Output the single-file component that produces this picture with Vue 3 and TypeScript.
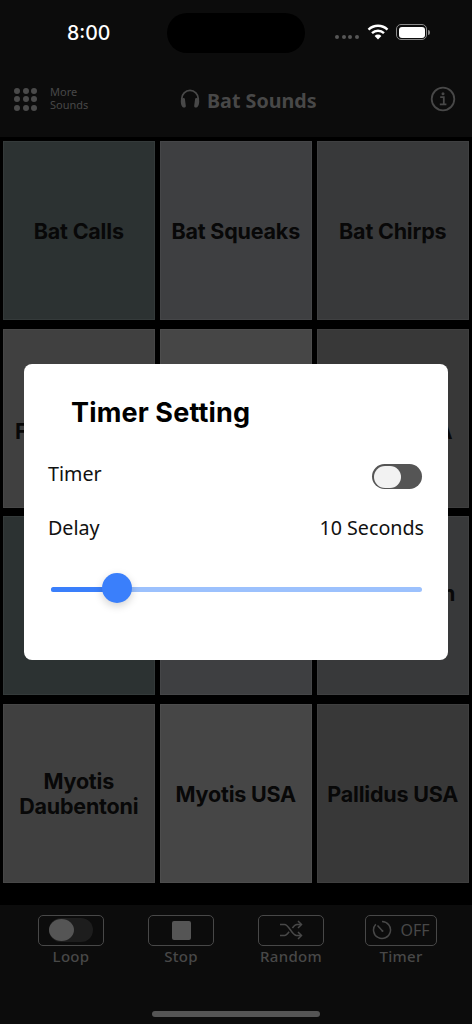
<template>
  <div class="phone">
    <div class="status-bar">
      <span class="clock">8:00</span>
      <div class="island"></div>
      <div class="signal">
        <i v-for="n in 4" :key="n"></i>
      </div>
      <svg class="wifi" width="22" height="16" viewBox="0 0 22 16">
        <path d="M1.5 5.6a13.6 13.6 0 0 1 19 0" fill="none" stroke="#fff" stroke-width="2.4" />
        <path d="M5 9.2a8.6 8.6 0 0 1 12 0" fill="none" stroke="#fff" stroke-width="2.4" />
        <path d="M7.6 11.9a4.8 4.8 0 0 1 6.8 0L11 15.4z" fill="#fff" />
      </svg>
      <div class="battery">
        <div class="battery-fill"></div>
      </div>
      <div class="battery-cap"></div>
    </div>

    <div class="nav-bar">
      <div class="more">
        <div class="dots">
          <i v-for="n in 9" :key="n"></i>
        </div>
        <span class="more-text">More<br />Sounds</span>
      </div>
      <div class="title">
        <svg width="20" height="20" viewBox="0 0 20 20">
          <path d="M1.8 12.5V9.6a8.200 8.200 0 0 1 16.400 0v2.900" fill="none" stroke="#484848" stroke-width="1.800" />
          <path d="M.8 12.200c0-2 1.200-3.200 2.700-3.200.8 0 1.300.5 1.400 1.100l.9 6.700c.1 1-.4 1.800-1.500 1.800C2 18.600.8 15.600.8 12.200z" fill="#484848" />
          <path d="M19.200 12.200c0-2-1.200-3.200-2.700-3.200-.8 0-1.300.5-1.400 1.100l-.9 6.700c-.1 1 .4 1.800 1.500 1.800 2.300 0 3.500-3 3.500-6.400z" fill="#484848" />
        </svg>
        <span>Bat Sounds</span>
      </div>
      <svg class="info" width="26" height="26" viewBox="0 0 26 26">
        <circle cx="13" cy="13" r="11.300" fill="none" stroke="#484848" stroke-width="1.800" />
        <circle cx="13" cy="7.800" r="1.500" fill="#484848" />
        <path d="M10.200 11.200h3.600v7M9.800 18.400h6.600" fill="none" stroke="#484848" stroke-width="1.800" />
      </svg>
    </div>

    <div class="pads">
      <div
        v-for="pad in pads"
        :key="pad.name"
        class="pad"
        :class="pad.tone"
      >{{ pad.name }}</div>
    </div>

    <div class="controls">
      <div class="controls-row">
        <div class="control">
          <div class="control-box">
            <div class="mini-track"><div class="mini-thumb"></div></div>
          </div>
          <span>Loop</span>
        </div>
        <div class="control">
          <div class="control-box">
            <div class="stop-square"></div>
          </div>
          <span>Stop</span>
        </div>
        <div class="control">
          <div class="control-box">
            <svg width="24" height="20" viewBox="0 0 24 20">
              <path d="M1 4.500h4.500c4.500 0 7.500 11 12 11h4.500M1 15.500h4.500c1.800 0 3.200-1.800 4.600-3.800M13.400 8c1.300-1.900 2.700-3.500 4.600-3.500h4" fill="none" stroke="#484848" stroke-width="1.500" />
              <path d="M19 1l3.500 3.500L19 8M19 12l3.500 3.500L19 19" fill="none" stroke="#484848" stroke-width="1.500" />
            </svg>
          </div>
          <span>Random</span>
        </div>
        <div class="control">
          <div class="control-box wide">
            <svg width="20" height="20" viewBox="0 0 20 20">
              <path d="M10 1.500a8.500 8.500 0 1 1-6.200 2.700" fill="none" stroke="#484848" stroke-width="1.500" />
              <path d="M5.500 5.500L10.500 11" fill="none" stroke="#484848" stroke-width="1.500" />
              <circle cx="10.500" cy="11" r="1" fill="#484848" />
            </svg>
            <b>OFF</b>
          </div>
          <span>Timer</span>
        </div>
      </div>
      <div class="home-bar"></div>
    </div>

    <div class="dialog">
      <h2>Timer Setting</h2>
      <div class="row">
        <span>Timer</span>
        <div class="switch"><div class="switch-thumb"></div></div>
      </div>
      <div class="row delay">
        <span>Delay</span>
        <span>{{ delay }} Seconds</span>
      </div>
      <div class="slider">
        <div class="slider-fill" :style="{ width: fillWidth }"></div>
        <div class="slider-thumb" :style="{ left: fillWidth }"></div>
      </div>
    </div>
  </div>
</template>

<script setup lang="ts">
import { computed, ref } from 'vue';

interface Pad {
  name: string;
  tone: string;
}

const names = [
  'Bat Calls', 'Bat Squeaks', 'Bat Chirps',
  'Bat\nFrequencies', 'Bat Screech', 'Noctule\nLesser USA',
  'Bat Hunt', 'Bat Flying', 'Vespertilion\nMurinus',
  'Myotis\nDaubentoni', 'Myotis USA', 'Pallidus USA',
];
const tones = ['a', 'b', 'c', 'd', 'e', 'f', 'a', 'b', 'c', 'd', 'e', 'f'];

const pads: Pad[] = names.map((name, i) => ({ name, tone: tones[i] }));

const delay = ref(10);
// slider runs 0..55 seconds here, thumb sits at 67px of 371px
const fillWidth = computed(() => `${(delay.value / 55.4) * 100}%`);
</script>

<style>
html,
body {
  margin: 0;
  background: #000;
}
</style>

<style scoped>
.phone {
  position: relative;
  width: 472px;
  height: 1024px;
  overflow: hidden;
  background: #0c0c0c;
  display: flex;
  flex-direction: column;
}

.status-bar {
  height: 61px;
  display: flex;
  align-items: flex-start;
  flex-shrink: 0;
}
.clock {
  margin: 21px 0 0 67px;
  width: 44px;
  color: #fff;
  font: 500 19.500px/24px Inter, sans-serif;
}
.island {
  margin: 13px 0 0 56px;
  width: 138px;
  height: 40px;
  border-radius: 20px;
  background: #000;
}
.signal {
  margin: 35px 0 0 30px;
  width: 24px;
  display: flex;
  justify-content: space-between;
}
.signal i {
  width: 4px;
  height: 4px;
  border-radius: 50%;
  background: #575757;
}
.wifi {
  margin: 24px 0 0 8px;
}
.battery {
  margin: 24px 0 0 7px;
  width: 31px;
  height: 16px;
  box-sizing: border-box;
  border: 1.5px solid #8a8a8a;
  border-radius: 5px;
  padding: 1.5px;
}
.battery-fill {
  width: 100%;
  height: 100%;
  background: #fff;
  border-radius: 3px;
}
.battery-cap {
  margin: 30px 0 0 1px;
  width: 2px;
  height: 5px;
  border-radius: 0 2px 2px 0;
  background: #8a8a8a;
}

.nav-bar {
  height: 76px;
  flex-shrink: 0;
  display: flex;
  align-items: center;
  padding: 0 16px 0 14px;
  position: relative;
}
.more {
  display: flex;
  align-items: center;
  gap: 13px;
  width: 166px;
}
.dots {
  display: grid;
  grid-template-columns: repeat(3, 6px);
  grid-auto-rows: 6px;
  gap: 2.500px;
}
.dots i {
  border-radius: 50%;
  background: #4a4a4a;
}
.more-text {
  margin-top: -3px;
  color: #484848;
  font: 400 11px/13px "Noto Sans", sans-serif;
}
.title {
  display: flex;
  align-items: center;
  gap: 7px;
  margin-top: 4px;
  color: #484848;
  font: 700 19.700px/26px "Noto Sans", sans-serif;
}
.title svg {
  margin-top: -5px;
}
.info {
  margin-left: auto;
}

.pads {
  height: 768px;
  flex-shrink: 0;
  box-sizing: border-box;
  background: #000;
  padding: 4px 0 0 2.500px;
  display: grid;
  grid-template-columns: repeat(3, 152.500px);
  grid-auto-rows: 179px;
  column-gap: 4.500px;
  row-gap: 8.700px;
}
.pad {
  display: flex;
  align-items: center;
  justify-content: center;
  text-align: center;
  white-space: pre-line;
  padding-top: 1px;
  color: #080808;
  font: 700 21.500px/25px Inter, sans-serif;
  letter-spacing: -0.2px;
  box-shadow: inset 0 0 0 1px rgba(255, 255, 255, 0.04);
}
.a { background: #2c3232; }
.b { background: #3e3f41; }
.c { background: #38393a; }
.d { background: #404040; }
.e { background: #464646; }
.f { background: #383838; }

.controls {
  flex: 1;
  display: flex;
  flex-direction: column;
  align-items: center;
}
.controls-row {
  align-self: flex-start;
  margin: 10px 0 0 16px;
  display: grid;
  grid-template-columns: repeat(4, 110px);
}
.control {
  display: flex;
  flex-direction: column;
  align-items: center;
  color: #484848;
  font: 500 15px/20px "Noto Sans", sans-serif;
  letter-spacing: 0.3px;
}
.control-box {
  width: 66px;
  height: 30.500px;
  box-sizing: border-box;
  border: 1px solid #484848;
  border-radius: 5px;
  display: flex;
  align-items: center;
  justify-content: center;
}
.control-box.wide {
  width: 72px;
  gap: 8px;
}
.control-box b {
  color: #484848;
  font: 400 16px/20px "Noto Sans", sans-serif;
  letter-spacing: 0;
}
.mini-track {
  width: 44px;
  height: 24px;
  border-radius: 12px;
  background: #1d1d1d;
}
.mini-thumb {
  width: 25px;
  height: 22px;
  margin-top: 1px;
  border-radius: 50%;
  background: #555;
}
.stop-square {
  width: 19px;
  height: 19px;
  border-radius: 2px;
  background: #555;
}
.home-bar {
  margin-top: 45.500px;
  width: 168px;
  height: 6px;
  border-radius: 3px;
  background: #555;
}

.dialog {
  position: absolute;
  left: 24px;
  top: 364px;
  width: 424px;
  height: 296px;
  box-sizing: border-box;
  padding: 33px 24px 0;
  background: #fff;
  border-radius: 8px;
}
.dialog h2 {
  margin: 0 0 31px 23px;
  color: #000;
  font: 700 27px/32px Inter, sans-serif;
  letter-spacing: 0.15px;
}
.row {
  display: flex;
  justify-content: space-between;
  align-items: center;
  height: 28px;
  color: #111;
  font: 400 19.700px/28px "Noto Sans", sans-serif;
}
.delay {
  margin-top: 26px;
}
.switch {
  width: 50px;
  height: 25px;
  margin: 5px 2px 0 0;
  box-sizing: border-box;
  border-radius: 13px;
  background: #555;
  padding: 1.500px;
}
.switch-thumb {
  width: 27px;
  height: 22px;
  border-radius: 11px;
  background: #f2f2f2;
}
.slider {
  position: relative;
  margin: 45px 2px 0 3px;
  height: 4.500px;
  border-radius: 3px;
  background: #9cc1fd;
}
.slider-fill {
  height: 100%;
  border-radius: 3px;
  background: #3a7ffb;
}
.slider-thumb {
  position: absolute;
  top: -14.300px;
  margin-left: -15.500px;
  width: 30px;
  height: 30px;
  border-radius: 50%;
  background: #3a7ffb;
  box-shadow: 0 3px 8px rgba(0, 0, 0, 0.18);
}
</style>
